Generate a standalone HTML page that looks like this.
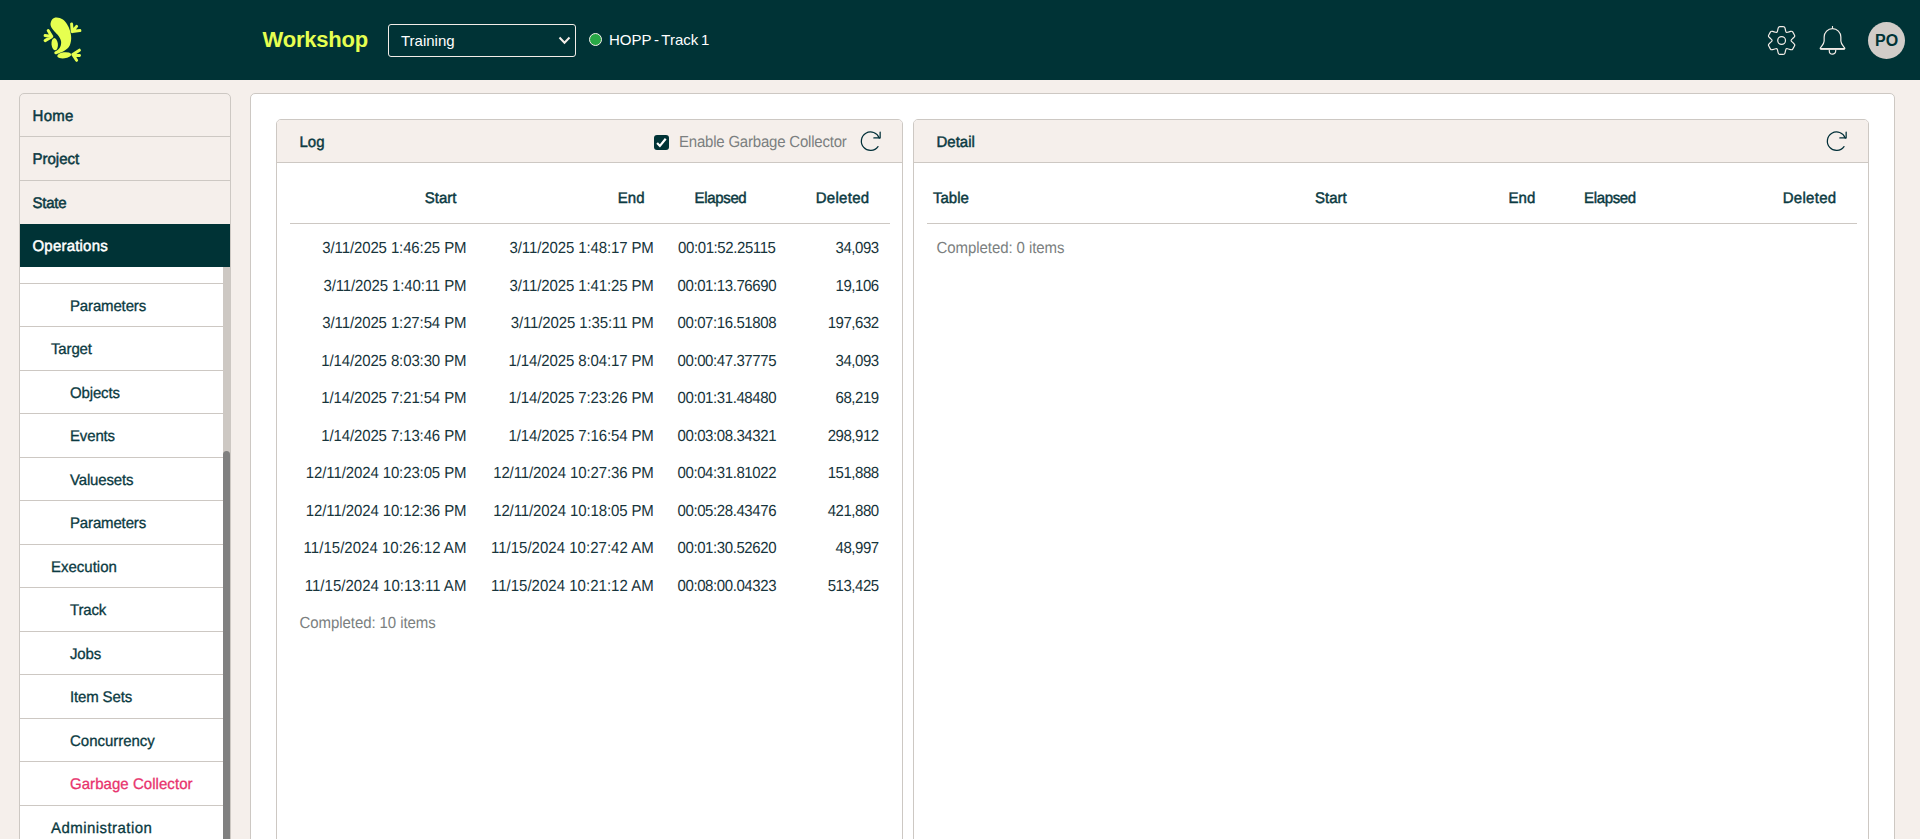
<!DOCTYPE html>
<html lang="en"><head><meta charset="utf-8"><title>Workshop</title>
<style>
*{box-sizing:border-box}
html,body{margin:0;padding:0}
body{width:1920px;height:839px;overflow:hidden;background:#f5efeb;font-family:"Liberation Sans",sans-serif;font-size:15px;line-height:22.5px;color:#0b3a42;position:relative}
.hdr{position:absolute;left:0;top:0;width:1920px;height:80px;background:#003336}
.frog{position:absolute;left:20px;top:0}
.brand{position:absolute;left:262.6px;top:24px;font-weight:700;font-size:22px;line-height:32px;color:#e6ff50;letter-spacing:-0.22px}
.sel{position:absolute;left:388px;top:24px;width:188px;height:33px;border:1px solid #f3ede8;border-radius:3px;color:#fff;font-size:15px;line-height:31px;padding-left:12px}
.sel svg{position:absolute;left:169.4px;top:11.4px}
.dot{position:absolute;left:589.1px;top:33.4px;width:13px;height:13px;border-radius:50%;background:#28a745;border:1.5px solid #f6f1ec}
.track{position:absolute;left:609px;top:29px;color:#fff;font-size:15px;line-height:22px;letter-spacing:0;word-spacing:-1.5px;white-space:nowrap}
.hicons{position:absolute;left:1760px;top:0}
.ava{position:absolute;left:1868.2px;top:21.6px;width:37px;height:37px;border-radius:50%;background:#d1ccc8;color:#003336;font-weight:700;font-size:16px;line-height:38.5px;text-align:center;letter-spacing:0.25px}

.side{position:absolute;left:19px;top:93px;width:212px;height:760px;border:1px solid #cdc8c3;border-radius:5px 5px 0 0;background:#f5efeb;overflow:hidden}
.mi{height:43.5px;padding:10px 0 0 12.5px;border-bottom:1px solid #cdc8c3;font-size:15px;-webkit-text-stroke:0.5px currentColor;white-space:nowrap}
.mi.on{background:#003336;color:#fff;border:0;margin-top:-1px;height:43px;padding-top:11.5px;letter-spacing:0.2px}
.subwrap{position:absolute;left:0;top:173px;width:203px;height:600px;background:#fff;overflow:hidden}
.subin{margin-top:-27px}
.si{height:43.5px;padding:12px 0 0 0;letter-spacing:-0.15px;border-bottom:1px solid #cdc8c3;font-size:15px;-webkit-text-stroke:0.3px currentColor;white-space:nowrap}
.si.l1{padding-left:31px}
.si.l2{padding-left:50px}
.si.act{color:#e8336d}
.sbt{position:absolute;left:203px;top:173px;width:7px;height:600px;background:#cdc8c3}
.sbh{position:absolute;left:203px;top:357px;width:7px;height:420px;background:#808080;border-radius:3.5px}

.main{position:absolute;left:250px;top:93px;width:1645px;height:780px;border:1px solid #cdc8c3;border-radius:5px 5px 0 0;background:#fff}
.card{position:absolute;top:119px;height:760px;border:1px solid #cdc8c3;border-radius:5px 5px 0 0;background:#fff}
.card1{left:276px;width:627px}
.card2{left:913px;width:956px}
.ch{height:43px;border-bottom:1px solid #cdc8c3;background:#f5efeb;border-radius:4px 4px 0 0;position:relative}
.ch .t{position:absolute;left:22.5px;top:11.7px;-webkit-text-stroke:0.45px currentColor}
.ch .refresh{position:absolute;right:20.4px;top:9px}
.cb{position:absolute;left:376.5px;top:15px;width:15px;height:15px;border-radius:3px;background:#003336}
.cb svg{position:absolute;left:0;top:0}
.cbl{position:absolute;left:402px;top:11px;color:#7b7f80;white-space:nowrap;letter-spacing:-0.21px}
table{border-collapse:separate;border-spacing:0;table-layout:fixed;position:absolute;left:13px;top:55.25px}
th{height:48px;padding:12.75px 20.5px 12.5px 11.25px;border-bottom:1px solid #cdc8c3;font-weight:400;-webkit-text-stroke:0.45px currentColor;white-space:nowrap;vertical-align:top}
td{height:37.5px;padding:7.5px 11.3px 7.5px 11.25px;white-space:nowrap;letter-spacing:-0.12px;color:#17343b}
td.c1{padding-right:10.6px}
tr.am td.r{letter-spacing:0.02px}
td.e{letter-spacing:-0.41px;text-align:center;padding-right:9.6px}td.n{letter-spacing:-0.45px;text-align:right}
.tx{display:inline-block;vertical-align:top;transform:scaleY(1.07);transform-origin:50% 27%}
.side,.card{text-rendering:geometricPrecision}
.mi .tx,.si .tx,th .tx,.t.tx{transform:scaleY(1.03)}
.r{text-align:right}.c{text-align:center}.l{text-align:left}
tr.sp td{height:5.5px;padding:0}
td.done{color:#7b7f80;text-align:left;letter-spacing:-0.08px;padding-left:9.6px}
</style></head><body>
<div class="hdr">
<svg class="frog" width="100" height="80" viewBox="20 0 100 80">
<path d="M50.50 23.80 C50.62 22.37 51.27 20.23 52.30 19.20 C53.33 18.17 54.93 17.55 56.70 17.60 C58.47 17.65 61.15 18.35 62.90 19.50 C64.65 20.65 66.03 22.67 67.20 24.50 C68.37 26.33 69.23 28.23 69.90 30.50 C70.57 32.77 71.25 35.55 71.20 38.10 C71.15 40.65 70.67 43.73 69.60 45.80 C68.53 47.87 66.48 49.30 64.80 50.50 C63.12 51.70 61.03 52.37 59.50 53.00 C57.97 53.63 56.45 54.43 55.60 54.30 C54.75 54.17 53.97 52.98 54.40 52.20 C54.83 51.42 57.17 50.63 58.20 49.60 C59.23 48.57 60.13 47.43 60.60 46.00 C61.07 44.57 61.33 42.67 61.00 41.00 C60.67 39.33 59.68 37.57 58.60 36.00 C57.52 34.43 55.67 32.97 54.50 31.60 C53.33 30.23 52.27 29.10 51.60 27.80 C50.93 26.50 50.38 25.23 50.50 23.80Z" fill="#e6ff50"/>
<ellipse cx="54.7" cy="44.2" rx="3.2" ry="6.1" transform="rotate(-6 54.7 44.2)" fill="#e6ff50"/>
<ellipse cx="64.2" cy="55.3" rx="7.0" ry="3.0" transform="rotate(-7 64.2 55.3)" fill="#e6ff50"/>
<g stroke="#e6ff50" stroke-width="3.0" stroke-linecap="round" fill="none">
<path d="M72.2 31.6L71.6 24.0 M72.2 31.6L76.6 26.4 M72.2 31.6L79.9 30.6"/>
<path d="M51.8 36.6L48.2 30.6 M51.8 36.6L45.1 35.4 M51.8 36.6L45.1 40.6"/>
<path d="M72.8 54.4L79.4 50.2 M72.8 54.4L79.5 55.4 M72.8 54.4L76.6 60.3"/>
</g>
</svg>
<div class="brand">Workshop</div>
<div class="sel">Training<svg width="13" height="9" viewBox="0 0 13 9"><path d="M1.5 1.5L6.5 6.8L11.5 1.5" fill="none" stroke="#f3ede8" stroke-width="2"/></svg></div>
<div class="dot"></div>
<div class="track">HOPP - Track 1</div>
<svg class="hicons" width="160" height="80" viewBox="1760 0 160 80"><path d="M1777.50 31.07Q1777.80 29.60 1778.19 28.15L1778.24 27.95Q1778.60 26.60 1780.00 26.60L1783.20 26.60Q1784.60 26.60 1784.96 27.95L1785.01 28.15Q1785.40 29.60 1785.70 31.07L1785.72 31.20Q1786.05 32.79 1787.59 32.28L1787.72 32.23Q1789.14 31.76 1790.59 31.37L1790.79 31.32Q1792.14 30.95 1792.84 32.16L1794.44 34.94Q1795.14 36.15 1794.15 37.14L1794.00 37.28Q1792.94 38.34 1791.82 39.33L1791.72 39.42Q1790.50 40.50 1791.72 41.58L1791.82 41.67Q1792.94 42.66 1794.00 43.72L1794.15 43.86Q1795.14 44.85 1794.44 46.06L1792.84 48.84Q1792.14 50.05 1790.79 49.68L1790.59 49.63Q1789.14 49.24 1787.72 48.77L1787.59 48.72Q1786.05 48.21 1785.72 49.80L1785.70 49.93Q1785.40 51.40 1785.01 52.85L1784.96 53.05Q1784.60 54.40 1783.20 54.40L1780.00 54.40Q1778.60 54.40 1778.24 53.05L1778.19 52.85Q1777.80 51.40 1777.50 49.93L1777.47 49.80Q1777.15 48.21 1775.61 48.72L1775.48 48.77Q1774.06 49.24 1772.61 49.63L1772.41 49.68Q1771.06 50.05 1770.36 48.84L1768.76 46.06Q1768.06 44.85 1769.05 43.86L1769.20 43.72Q1770.26 42.66 1771.38 41.67L1771.48 41.58Q1772.70 40.50 1771.48 39.42L1771.38 39.33Q1770.26 38.34 1769.20 37.28L1769.05 37.14Q1768.06 36.15 1768.76 34.94L1770.36 32.16Q1771.06 30.95 1772.41 31.32L1772.61 31.37Q1774.06 31.76 1775.48 32.23L1775.61 32.28Q1777.15 32.79 1777.47 31.20Z" fill="none" stroke="#f3ede8" stroke-width="1.2" stroke-linejoin="round"/><circle cx="1781.6" cy="40.5" r="3.9" fill="none" stroke="#f3ede8" stroke-width="1.2"/><g transform="translate(-0.5 -0.3)" fill="none" stroke="#f3ede8" stroke-width="1.2" stroke-linejoin="round" stroke-linecap="butt"><path d="M1833 26.3V29.2" stroke-width="1.1"/><path d="M1821.3 49.2C1820.7 49.2 1820.5 48.6 1820.9 48.1C1822.9 45.6 1824.65 43.9 1824.65 41.2V37.35A8.35 8.35 0 0 1 1841.35 37.35V41.2C1841.35 43.9 1843.1 45.6 1845.1 48.1C1845.5 48.6 1845.3 49.2 1844.7 49.2Z"/><path d="M1820.9 49.2H1845.1" stroke-width="1.7"/><path d="M1829.8 50V51.3A3.2 3.2 0 0 0 1836.2 51.3V50"/></g></svg>
<div class="ava">PO</div>
</div>

<div class="side">
<div class="mi" style="height:43px;padding-top:11.5px;letter-spacing:0.3px"><span class="tx">Home</span></div>
<div class="mi" style="height:44px;padding-top:11.5px"><span class="tx">Project</span></div>
<div class="mi" style="height:44px;padding-top:12px;letter-spacing:-0.25px"><span class="tx">State</span></div>
<div class="mi on"><span class="tx">Operations</span></div>
<div class="subwrap"><div class="subin">
<div class="si l2"><span class="tx">&nbsp;</span></div>
<div class="si l2"><span class="tx">Parameters</span></div>
<div class="si l1"><span class="tx">Target</span></div>
<div class="si l2"><span class="tx">Objects</span></div>
<div class="si l2"><span class="tx">Events</span></div>
<div class="si l2"><span class="tx">Valuesets</span></div>
<div class="si l2"><span class="tx">Parameters</span></div>
<div class="si l1" style="letter-spacing:0.0px"><span class="tx">Execution</span></div>
<div class="si l2"><span class="tx">Track</span></div>
<div class="si l2"><span class="tx">Jobs</span></div>
<div class="si l2"><span class="tx">Item Sets</span></div>
<div class="si l2" style="letter-spacing:-0.02px"><span class="tx">Concurrency</span></div>
<div class="si l2 act" style="letter-spacing:0.05px"><span class="tx">Garbage Collector</span></div>
<div class="si l1" style="letter-spacing:0.45px"><span class="tx">Administration</span></div>
</div></div>
<div class="sbt"></div><div class="sbh"></div>
</div>

<div class="main"></div>
<div class="card card1">
<div class="ch"><span class="t tx">Log</span>
<div class="cb"><svg width="15" height="15" viewBox="0 0 15 15"><path d="M3.1 7.9L5.9 10.9L11.7 3.7" fill="none" stroke="#fff" stroke-width="2.2" stroke-linecap="butt" stroke-linejoin="miter"/></svg></div>
<span class="cbl tx">Enable Garbage Collector</span>
<svg class="refresh" width="24" height="24" viewBox="0 0 24 24"><g fill="none" stroke="#002f38" stroke-width="1.25" stroke-linecap="round" stroke-linejoin="round"><path d="M21.25 9.15A9.2 9.2 0 1 0 19.99 17.56"/><path d="M22.15 3.0V8.9H15.85"/></g></svg>
</div>
<table style="width:600px">
<colgroup><col style="width:187px"><col style="width:188px"><col style="width:122px"><col style="width:103px"></colgroup>
<thead><tr><th class="r"><span class="tx">Start</span></th><th class="r"><span class="tx">End</span></th><th class="c" style="letter-spacing:-0.35px;padding-left:9.5px"><span class="tx">Elapsed</span></th><th class="r" style="letter-spacing:0.3px"><span class="tx">Deleted</span></th></tr></thead>
<tbody><tr class="sp"><td colspan="4"></td></tr>
<tr><td class="r c1"><span class="tx">3/11/2025 1:46:25 PM</span></td><td class="r"><span class="tx">3/11/2025 1:48:17 PM</span></td><td class="e"><span class="tx">00:01:52.25115</span></td><td class="n"><span class="tx">34,093</span></td></tr>
<tr><td class="r c1"><span class="tx">3/11/2025 1:40:11 PM</span></td><td class="r"><span class="tx">3/11/2025 1:41:25 PM</span></td><td class="e"><span class="tx">00:01:13.76690</span></td><td class="n"><span class="tx">19,106</span></td></tr>
<tr><td class="r c1"><span class="tx">3/11/2025 1:27:54 PM</span></td><td class="r"><span class="tx">3/11/2025 1:35:11 PM</span></td><td class="e"><span class="tx">00:07:16.51808</span></td><td class="n"><span class="tx">197,632</span></td></tr>
<tr><td class="r c1"><span class="tx">1/14/2025 8:03:30 PM</span></td><td class="r"><span class="tx">1/14/2025 8:04:17 PM</span></td><td class="e"><span class="tx">00:00:47.37775</span></td><td class="n"><span class="tx">34,093</span></td></tr>
<tr><td class="r c1"><span class="tx">1/14/2025 7:21:54 PM</span></td><td class="r"><span class="tx">1/14/2025 7:23:26 PM</span></td><td class="e"><span class="tx">00:01:31.48480</span></td><td class="n"><span class="tx">68,219</span></td></tr>
<tr><td class="r c1"><span class="tx">1/14/2025 7:13:46 PM</span></td><td class="r"><span class="tx">1/14/2025 7:16:54 PM</span></td><td class="e"><span class="tx">00:03:08.34321</span></td><td class="n"><span class="tx">298,912</span></td></tr>
<tr><td class="r c1"><span class="tx">12/11/2024 10:23:05 PM</span></td><td class="r"><span class="tx">12/11/2024 10:27:36 PM</span></td><td class="e"><span class="tx">00:04:31.81022</span></td><td class="n"><span class="tx">151,888</span></td></tr>
<tr><td class="r c1"><span class="tx">12/11/2024 10:12:36 PM</span></td><td class="r"><span class="tx">12/11/2024 10:18:05 PM</span></td><td class="e"><span class="tx">00:05:28.43476</span></td><td class="n"><span class="tx">421,880</span></td></tr>
<tr class="am"><td class="r c1"><span class="tx">11/15/2024 10:26:12 AM</span></td><td class="r"><span class="tx">11/15/2024 10:27:42 AM</span></td><td class="e"><span class="tx">00:01:30.52620</span></td><td class="n"><span class="tx">48,997</span></td></tr>
<tr class="am"><td class="r c1"><span class="tx">11/15/2024 10:13:11 AM</span></td><td class="r"><span class="tx">11/15/2024 10:21:12 AM</span></td><td class="e"><span class="tx">00:08:00.04323</span></td><td class="n"><span class="tx">513,425</span></td></tr>
<tr><td colspan="4" class="done"><span class="tx">Completed: 10 items</span></td></tr>
</tbody></table>
</div>

<div class="card card2">
<div class="ch"><span class="t tx">Detail</span>
<svg class="refresh" width="24" height="24" viewBox="0 0 24 24"><g fill="none" stroke="#002f38" stroke-width="1.25" stroke-linecap="round" stroke-linejoin="round"><path d="M21.25 9.15A9.2 9.2 0 1 0 19.99 17.56"/><path d="M22.15 3.0V8.9H15.85"/></g></svg>
</div>
<table style="width:930px">
<colgroup><col style="width:253px"><col style="width:187.2px"><col style="width:188.6px"><col style="width:117.5px"><col style="width:183.7px"></colgroup>
<thead><tr><th class="l" style="padding-left:6px"><span class="tx">Table</span></th><th class="r"><span class="tx">Start</span></th><th class="r"><span class="tx">End</span></th><th class="c" style="letter-spacing:-0.35px"><span class="tx">Elapsed</span></th><th class="r" style="letter-spacing:0.3px"><span class="tx">Deleted</span></th></tr></thead>
<tbody><tr class="sp"><td colspan="5"></td></tr>
<tr><td colspan="5" class="done"><span class="tx">Completed: 0 items</span></td></tr>
</tbody></table>
</div>
</body></html>
